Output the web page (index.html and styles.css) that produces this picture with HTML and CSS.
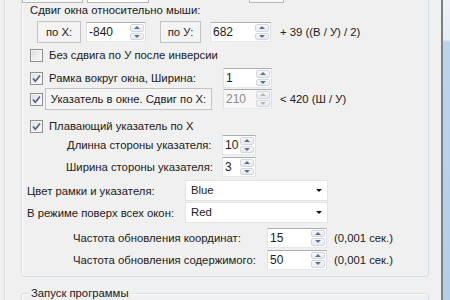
FILE: index.html
```html
<!DOCTYPE html>
<html lang="ru">
<head>
  <meta charset="UTF-8" />
  <title>Настройки указателя</title>
  <link rel="stylesheet" href="styles.css">
</head>
<body>
  <div class="screen">
    <div class="main">
      <div class="group group-settings">
        <div class="row row-prev">
          <span class="stub stub-a"></span>
          <span class="stub stub-b"></span>
          <span class="stub stub-c"></span>
        </div>

        <div class="row row-title">Сдвиг окна относительно мыши:</div>

        <div class="row row-offset">
          <span class="tag tag-x">по X:</span>
          <span class="spin spin-x"><span class="val">-840</span><span class="arrows"><i class="up"></i><i class="down"></i></span></span>
          <span class="tag tag-y">по У:</span>
          <span class="spin spin-y"><span class="val">682</span><span class="arrows"><i class="up"></i><i class="down"></i></span></span>
          <span class="note">+ 39 ((В / У) / 2)</span>
        </div>

        <div class="row row-check row-c">
          <span class="check"></span>
          <span class="check-text">Без сдвига по У после инверсии</span>
        </div>

        <div class="row row-d">
          <span class="check checked"><svg viewBox="0 0 11 11"><path d="M2 5.5 L4.3 8.2 L9 2.5"/></svg></span>
          <span class="check-text frame-text">Рамка вокруг окна, Ширина:</span>
          <span class="spin spin-small"><span class="val">1</span><span class="arrows"><i class="up"></i><i class="down"></i></span></span>
        </div>

        <div class="row row-e">
          <span class="check checked"><svg viewBox="0 0 11 11"><path d="M2 5.5 L4.3 8.2 L9 2.5"/></svg></span>
          <span class="tag tag-pointer">Указатель в окне. Сдвиг по X:</span>
          <span class="spin spin-small disabled"><span class="val">210</span><span class="arrows"><i class="up"></i><i class="down"></i></span></span>
          <span class="note">&lt; 420 (Ш / У)</span>
        </div>

        <div class="row row-check row-f">
          <span class="check checked"><svg viewBox="0 0 11 11"><path d="M2 5.5 L4.3 8.2 L9 2.5"/></svg></span>
          <span class="check-text">Плавающий указатель по X</span>
        </div>

        <div class="row row-g">
          <span class="lbl lbl-side">Длинна стороны указателя:</span>
          <span class="spin spin-tiny"><span class="val">10</span><span class="arrows"><i class="up"></i><i class="down"></i></span></span>
        </div>

        <div class="row row-h">
          <span class="lbl lbl-side lbl-width">Ширина стороны указателя:</span>
          <span class="spin spin-tiny"><span class="val">3</span><span class="arrows"><i class="up"></i><i class="down"></i></span></span>
        </div>

        <div class="row row-i">
          <span class="lbl lbl-color">Цвет рамки и указателя:</span>
          <span class="combo"><span class="val">Blue</span><span class="drop"></span></span>
        </div>

        <div class="row row-j">
          <span class="lbl lbl-color">В режиме поверх всех окон:</span>
          <span class="combo"><span class="val">Red</span><span class="drop"></span></span>
        </div>

        <div class="row row-k">
          <span class="lbl lbl-rate">Частота обновления координат:</span>
          <span class="spin spin-rate"><span class="val">15</span><span class="arrows"><i class="up"></i><i class="down"></i></span></span>
          <span class="unit">(0,001 сек.)</span>
        </div>

        <div class="row row-l">
          <span class="lbl lbl-rate">Частота обновления содержимого:</span>
          <span class="spin spin-rate"><span class="val">50</span><span class="arrows"><i class="up"></i><i class="down"></i></span></span>
          <span class="unit">(0,001 сек.)</span>
        </div>
      </div>

      <div class="group group-launch">
        <span class="group-title">Запуск программы</span>
      </div>
    </div>
    <div class="frame-right"></div>
  </div>
</body>
</html>
```

FILE: styles.css
```css
html, body {
  margin: 0;
  padding: 0;
}
body {
  font-family: 'Liberation Sans', Arial, sans-serif;
  font-size: 11.3px;
  color: #202020;
  background: #f0f0f0;
  overflow: hidden;
}
.screen {
  display: flex;
  width: 450px;
  height: 300px;
  overflow: hidden;
}
.main {
  flex: 1;
  margin-left: 4px;
  border-left: 1px solid #d9d9d9;
  box-shadow: inset 1px 0 #fbfbfb;
}
.frame-right {
  width: 7px;
  border-left: 2px solid #7d7f82;
  background: linear-gradient(#eef2f7 0, #e4ecf5 40px, #bcd3ec 42px, #b4cde9 100%);
}

/* group boxes */
.group {
  margin-left: 16px;
  margin-right: 12px;
  border: 1px solid #d5dfe5;
  border-radius: 3px;
  box-shadow: inset 1px 1px #fdfdfd;
}
.group-settings {
  margin-top: -40px;
  padding: 0 0 6px 8px;
}
.group-launch {
  margin-top: 16px;
  height: 30px;
}
.group-title {
  display: inline-block;
  margin: -8px 0 0 8px;
  padding: 0 1px;
  background: #f0f0f0;
  line-height: 14px;
  vertical-align: top;
}

/* rows */
.row {
  display: flex;
  align-items: center;
  white-space: nowrap;
}
.row-prev { margin-top: 21px; height: 21px; }
.row-title { height: 14px; }
.row-offset { margin-top: 4px; height: 22px; }
.row-c { margin-top: 5px; height: 14px; }
.row-d { margin-top: 6px; height: 20px; }
.row-e { height: 22px; }
.row-f { margin-top: 9px; height: 14px; }
.row-g { margin-top: 2px; height: 20px; }
.row-h { margin-top: 2px; height: 20px; }
.row-i { margin-top: 3px; height: 21px; }
.row-j { margin-top: 1px; height: 21px; }
.row-k { margin-top: 4px; height: 21px; }
.row-l { margin-top: 1px; height: 21px; }

/* stubs of the row above the view */
.stub {
  box-sizing: border-box;
  height: 21px;
  border: 1px solid #b8b8b8;
  background: #f7f7f7;
}
.stub-a { margin-left: -8px; width: 61px; }
.stub-b { margin-left: 4px; width: 62px; background: #fff; }
.stub-c { margin-left: 100px; width: 35px; }

/* bordered labels */
.tag {
  box-sizing: border-box;
  height: 22px;
  line-height: 20px;
  border: 1px solid #c2c2c2;
  background: #f4f4f4;
  text-align: center;
}
.tag-x { margin-left: 7px; width: 44px; }
.tag-y { margin-left: 14px; width: 41px; }
.tag-pointer { margin-left: 2px; width: 167px; }

/* numeric up-down */
.spin {
  box-sizing: border-box;
  display: flex;
  height: 20px;
  border: 1px solid;
  border-color: #abadb3 #dbdfe6 #e3e9ef #e2e3ea;
  background: #fff;
}
.spin .val {
  flex: 1;
  padding-left: 2px;
  line-height: 18px;
  font-size: 12px;
}
.arrows {
  display: flex;
  flex-direction: column;
  width: 15px;
}
.arrows i {
  flex: 1;
  display: flex;
  align-items: center;
  justify-content: center;
  margin: 1px 1px 0 0;
  border: 1px solid #d3d6dc;
  border-radius: 2px;
  background: linear-gradient(#f7f8fa, #e6e9ee);
}
.arrows i.down { margin-bottom: 1px; }
.arrows i::after {
  content: "";
  border-left: 3px solid transparent;
  border-right: 3px solid transparent;
}
.arrows i.up::after { border-bottom: 3px solid #5a6f95; }
.arrows i.down::after { border-top: 3px solid #5a6f95; }
.spin.disabled { background: #f7f7f7; color: #8a8a8a; }
.spin.disabled .arrows i::after { border-bottom-color: #b5b5b5; border-top-color: #b5b5b5; }
.spin.disabled .arrows i.up::after { border-top-color: transparent; }
.spin.disabled .arrows i.down::after { border-bottom-color: transparent; }

.spin-x { margin-left: 5px; width: 60px; }
.spin-y { margin-left: 9px; width: 61px; }
.spin-small { width: 49px; }
.row-e .spin-small { margin-left: 11px; }
.spin-tiny { width: 34px; }
.spin-rate { width: 60px; }

.note { margin-left: 9px; }
.row-e .note { margin-left: 8px; }
.unit { margin-left: 7px; }

/* check boxes */
.check {
  box-sizing: border-box;
  width: 13px;
  height: 13px;
  border: 1px solid #8f8f8f;
  background: linear-gradient(135deg, #dcdcdc, #fdfdfd);
  box-shadow: inset 0 0 0 1px #f4f4f4;
  display: flex;
  align-items: center;
  justify-content: center;
}
.check svg {
  width: 11px;
  height: 11px;
}
.check path {
  fill: none;
  stroke: #4a5d93;
  stroke-width: 1.6;
}
.check-text { margin-left: 6px; }
.frame-text { width: 174px; }

/* plain labels */
.lbl-side { margin-left: 37px; width: 155px; }
.lbl-width { margin-left: 36px; width: 156px; }
.lbl-color { margin-left: -3px; width: 158px; }
.lbl-rate { margin-left: 43px; width: 194px; }

/* drop-down lists */
.combo {
  box-sizing: border-box;
  display: flex;
  width: 143px;
  height: 21px;
  border: 1px solid #e3e3e3;
  background: #fff;
}
.combo .val {
  flex: 1;
  padding-left: 5px;
  line-height: 19px;
}
.drop {
  width: 17px;
  display: flex;
  align-items: center;
  justify-content: center;
}
.drop::after {
  content: "";
  border-left: 3px solid transparent;
  border-right: 3px solid transparent;
  border-top: 3px solid #111;
}
```
